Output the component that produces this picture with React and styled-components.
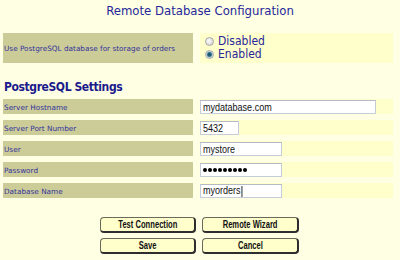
import React from 'react';
import styled, { createGlobalStyle } from 'styled-components';

const GlobalStyle = createGlobalStyle`
    html, body {
        margin: 0;
        padding: 0;
        background: #FFFFE3;
    }
`

const Page = styled.div`
    width: 400px;
    height: 260px;
    box-sizing: border-box;
    padding: 3px 7px 0 3px;
    background: #FFFFE3;
    font-family: "DejaVu Sans Condensed", "DejaVu Sans", Verdana, sans-serif;
    overflow: hidden;
`

const Title = styled.h1`
    margin: 0 0 15px 0;
    text-align: center;
    font-size: 13px;
    font-weight: normal;
    color: #27279A;
    line-height: 15px;
    padding-left: 4px;
`

const Row = styled.div`
    display: grid;
    grid-template-columns: 190px 193px;
    column-gap: 7px;
    height: ${props => props.tall ? '30px' : '15px'};
    margin-bottom: 6px;
`

const Label = styled.div`
    background: #CCCC99;
    color: #333399;
    font-family: "DejaVu Sans", Verdana, sans-serif;
    font-size: 7.3px;
    display: flex;
    align-items: center;
    padding-left: 1px;
    padding-top: 1px;
    box-sizing: border-box;
    white-space: nowrap;
`

const Value = styled.div`
    background: #FFFFCC;
    display: flex;
    flex-direction: ${props => props.column ? 'column' : 'row'};
    justify-content: ${props => props.column ? 'center' : 'flex-start'};
    align-items: ${props => props.column ? 'flex-start' : 'center'};
`

const Option = styled.label`
    display: flex;
    align-items: center;
    gap: 4px;
    padding-left: 5px;
    font-size: 12px;
    line-height: 13px;
    height: 13px;
    color: #27279A;
    white-space: nowrap;
`

const Radio = styled.span`
    width: 7px;
    height: 7px;
    border-radius: 50%;
    border: 1px solid #A8A8A8;
    background: ${props => props.checked
        ? 'radial-gradient(circle, #1E5A70 0 1.8px, #8FB8C8 2.6px, #E8E8E8 3.5px)'
        : 'radial-gradient(circle at 40% 40%, #FFFFFF, #C8C8C8)'};
    box-sizing: content-box;
`

const Heading = styled.h2`
    margin: 17px 0 5px 1px;
    font-size: 12px;
    letter-spacing: -0.4px;
    font-weight: bold;
    color: #1A1A8C;
    line-height: 14px;
`

const Field = styled.div`
    width: ${props => props.w}px;
    height: 14px;
    box-sizing: border-box;
    background: #FFFFFF;
    border: 1px solid #C6CDD8;
    border-top-color: #B3BAC6;
    padding-left: 2px;
    display: flex;
    align-items: center;
    overflow: hidden;
`

const FieldText = styled.span`
    display: inline-block;
    font-family: "Liberation Sans", Arial, sans-serif;
    font-size: 11px;
    line-height: 12px;
    color: #111;
    white-space: nowrap;
    transform: scaleX(0.82);
    transform-origin: left center;
`

const Dot = styled.span`
    display: inline-block;
    width: 4px;
    height: 4px;
    border-radius: 50%;
    background: #000;
    margin-right: 1px;
`

const Caret = styled.span`
    display: inline-block;
    width: 1px;
    height: 11px;
    background: #000;
    margin-left: 1px;
    vertical-align: middle;
`

const Buttons = styled.div`
    display: grid;
    grid-template-columns: 96px 97px;
    column-gap: 6px;
    row-gap: 5px;
    justify-content: start;
    margin: 19px 0 0 97px;
`

const Button = styled.button`
    height: 16px;
    padding: 0;
    box-sizing: border-box;
    background: #FFFFCC;
    border: 1px solid #6A6A5A;
    border-right: 2px solid #2E2E2E;
    border-bottom: 2px solid #2E2E2E;
    border-radius: 4px;
    display: flex;
    align-items: center;
    justify-content: center;
`

const ButtonText = styled.span`
    display: inline-block;
    font-family: "Liberation Sans", Arial, sans-serif;
    font-weight: bold;
    font-size: 10px;
    line-height: 12px;
    color: #111;
    white-space: nowrap;
    transform: scaleX(0.76);
`

const fields = [
    { label: 'Server Hostname', value: 'mydatabase.com', width: 176 },
    { label: 'Server Port Number', value: '5432', width: 39 },
    { label: 'User', value: 'mystore', width: 82 },
    { label: 'Password', value: '', width: 82, secret: 9 },
    { label: 'Database Name', value: 'myorders', width: 82, caret: true },
]

const App = () => {
    return (
        <>
            <GlobalStyle />
            <Page>
                <Title>Remote Database Configuration</Title>
                <Row tall>
                    <Label>Use PostgreSQL database for storage of orders</Label>
                    <Value column>
                        <Option><Radio />Disabled</Option>
                        <Option><Radio checked />Enabled</Option>
                    </Value>
                </Row>
                <Heading>PostgreSQL Settings</Heading>
                {fields.map(f => (
                    <Row key={f.label}>
                        <Label>{f.label}</Label>
                        <Value>
                            <Field w={f.width}>
                                {f.secret
                                    ? Array.from({ length: f.secret }).map((_, i) => <Dot key={i} />)
                                    : <FieldText>{f.value}{f.caret && <Caret />}</FieldText>}
                            </Field>
                        </Value>
                    </Row>
                ))}
                <Buttons>
                    <Button><ButtonText>Test Connection</ButtonText></Button>
                    <Button><ButtonText>Remote Wizard</ButtonText></Button>
                    <Button><ButtonText>Save</ButtonText></Button>
                    <Button><ButtonText>Cancel</ButtonText></Button>
                </Buttons>
            </Page>
        </>
    )
}

export default App;
